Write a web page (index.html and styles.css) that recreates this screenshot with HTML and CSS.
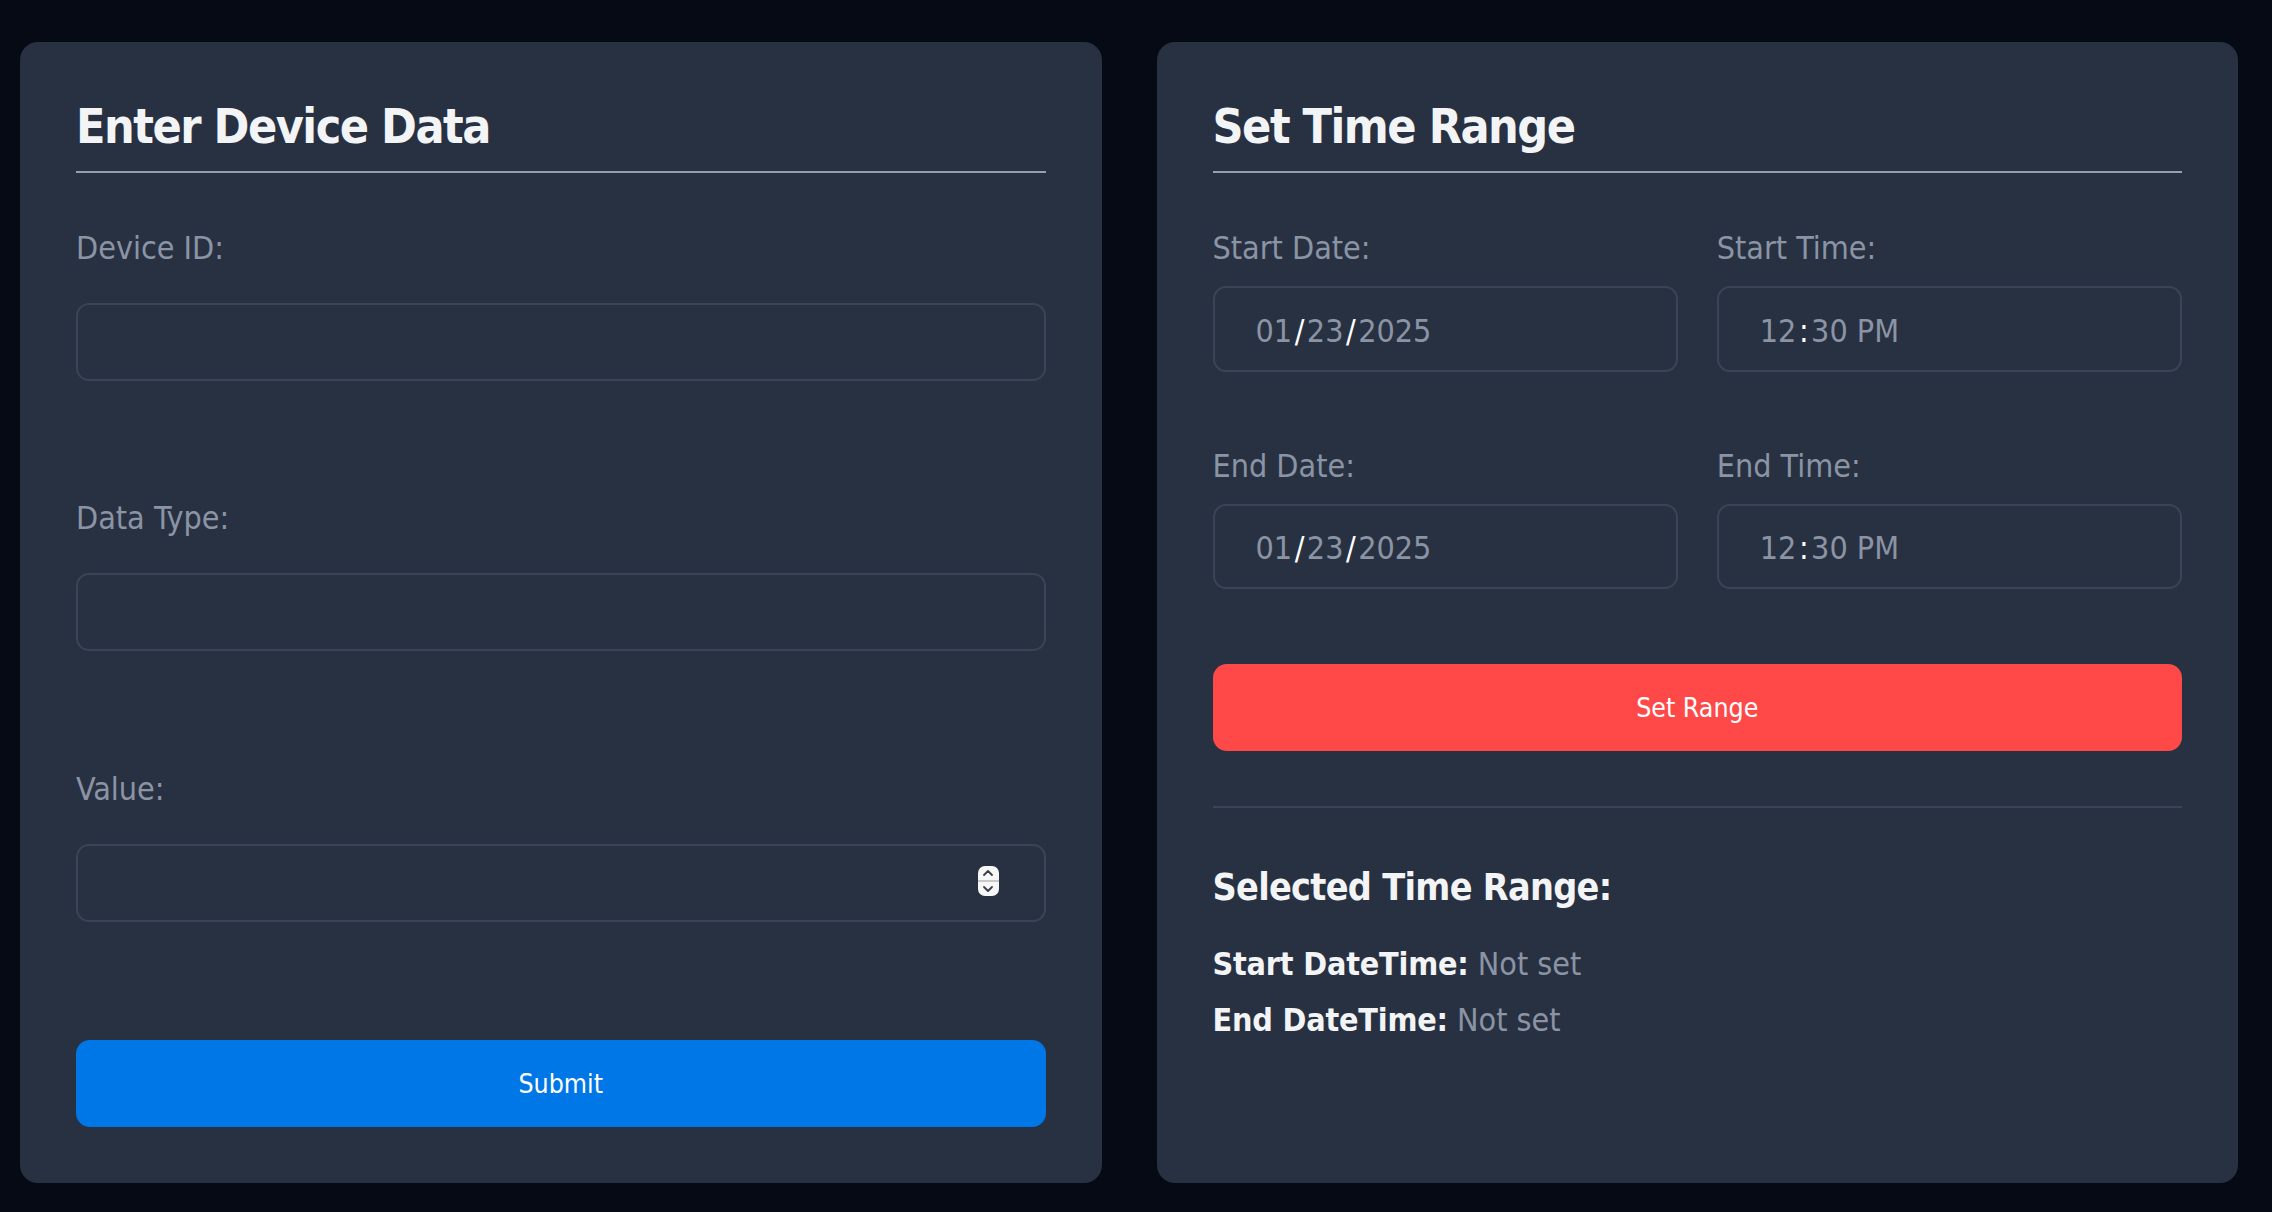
FILE: index.html
```html
<!DOCTYPE html>
<html lang="en">
<head>
<meta charset="utf-8">
<title>Device Data</title>
<link rel="stylesheet" href="styles.css">
</head>
<body>
<main class="layout">
  <section class="card">
    <h1 class="card-title">Enter Device Data</h1>
    <form class="device-form">
      <div class="field">
        <label class="field-label">Device ID:</label>
        <div class="input"></div>
      </div>
      <div class="field field-mid">
        <label class="field-label">Data Type:</label>
        <div class="input"></div>
      </div>
      <div class="field field-last">
        <label class="field-label">Value:</label>
        <div class="input input-number">
          <span class="spinner">
            <svg class="spin-up" viewBox="0 0 12 8" width="12" height="8"><path d="M2 6 L6 2 L10 6" fill="none" stroke="#3a3f47" stroke-width="1.8" stroke-linecap="round" stroke-linejoin="round"/></svg>
            <span class="spin-sep"></span>
            <svg class="spin-down" viewBox="0 0 12 8" width="12" height="8"><path d="M2 2 L6 6 L10 2" fill="none" stroke="#3a3f47" stroke-width="1.8" stroke-linecap="round" stroke-linejoin="round"/></svg>
          </span>
        </div>
      </div>
      <button type="button" class="btn btn-blue">Submit</button>
    </form>
  </section>

  <section class="card">
    <h1 class="card-title">Set Time Range</h1>
    <div class="range-grid">
      <div class="range-field">
        <label class="field-label">Start Date:</label>
        <div class="input input-tall"><span class="dt">01<i>/</i>23<i>/</i>2025</span></div>
      </div>
      <div class="range-field">
        <label class="field-label">Start Time:</label>
        <div class="input input-tall"><span class="dt">12<i>:</i>30 PM</span></div>
      </div>
      <div class="range-field">
        <label class="field-label">End Date:</label>
        <div class="input input-tall"><span class="dt">01<i>/</i>23<i>/</i>2025</span></div>
      </div>
      <div class="range-field">
        <label class="field-label">End Time:</label>
        <div class="input input-tall"><span class="dt">12<i>:</i>30 PM</span></div>
      </div>
    </div>
    <button type="button" class="btn btn-red">Set Range</button>
    <hr class="divider">
    <h3 class="sub-title">Selected Time Range:</h3>
    <div class="summary">
      <p class="summary-row"><strong>Start DateTime:</strong> <span class="muted">Not set</span></p>
      <p class="summary-row"><strong>End DateTime:</strong> <span class="muted">Not set</span></p>
    </div>
  </section>
</main>
</body>
</html>
```

FILE: styles.css
```css
* { box-sizing: border-box; }

html, body {
  margin: 0;
  padding: 0;
}

body {
  background: #050a14;
  font-family: "DejaVu Sans Condensed", "DejaVu Sans", sans-serif;
  color: #f3f4f6;
}

.layout {
  height: 1212px;
  padding: 42px 34px 29px 20px;
  display: grid;
  grid-template-columns: 1fr 1fr;
  column-gap: 55px;
}

.card {
  background: #283142;
  border-radius: 18px;
  padding: 56px;
  display: flex;
  flex-direction: column;
}

.card-title {
  margin: 0;
  font-size: 48px;
  font-weight: bold;
  line-height: 56px;
  letter-spacing: -1.5px;
  color: #f3f4f6;
  padding-bottom: 17px;
  border-bottom: 2px solid #979fad;
}

.device-form {
  display: flex;
  flex-direction: column;
  margin-top: 57px;
}

.field {
  display: flex;
  flex-direction: column;
  gap: 36px;
  margin-bottom: 119px;
}

.field-mid {
  margin-bottom: 120px;
}

.field-last {
  margin-bottom: 118px;
}

.field-label {
  font-size: 32px;
  line-height: 37px;
  color: #8b94a4;
}

.input {
  height: 78px;
  border: 2px solid #3b4456;
  border-radius: 13px;
  background: #283142;
  position: relative;
  display: flex;
  align-items: center;
}

.input-tall {
  height: 86px;
  padding-left: 41px;
}

.spinner {
  position: absolute;
  right: 45px;
  top: 20px;
  width: 21px;
  height: 30px;
  background: #f7f7f7;
  border-radius: 7px;
  display: flex;
  flex-direction: column;
  align-items: center;
  justify-content: space-between;
  padding: 3px 0;
}

.spin-sep {
  width: 100%;
  height: 2px;
  background: #c9c9c9;
}

.dt {
  font-size: 32px;
  line-height: 37px;
  color: #8b94a4;
  margin-top: 4px;
}

.dt i {
  font-style: normal;
  color: #ffffff;
  margin: 0 2.5px;
}

.btn {
  height: 87px;
  border: none;
  border-radius: 14px;
  color: #ffffff;
  font-family: "DejaVu Sans Condensed", "DejaVu Sans", sans-serif;
  font-size: 26.5px;
  width: 100%;
  padding: 0;
  flex-shrink: 0;
}

.btn-blue { background: #0077e6; }
.btn-red { background: #ff4949; }

.range-grid {
  display: grid;
  grid-template-columns: 1fr 1fr;
  column-gap: 39px;
  row-gap: 76px;
  margin-top: 57px;
}

.range-field {
  display: flex;
  flex-direction: column;
  gap: 19px;
}

.range-field:nth-child(n+3) .input-tall {
  height: 85px;
}

.btn-red {
  margin-top: 75px;
}

.divider {
  margin: 55px 0 0;
  border: none;
  height: 2px;
  background: #3b4456;
}

.sub-title {
  margin: 57px 0 0;
  font-size: 37.4px;
  line-height: 44px;
  font-weight: bold;
  letter-spacing: -0.7px;
  color: #f3f4f6;
}

.summary {
  margin-top: 37px;
  display: flex;
  flex-direction: column;
  gap: 19px;
}

.summary-row {
  margin: 0;
  font-size: 32px;
  line-height: 37px;
}

.summary-row strong {
  letter-spacing: -0.2px;
  color: #f3f4f6;
}

.muted {
  color: #8b94a4;
}
```
